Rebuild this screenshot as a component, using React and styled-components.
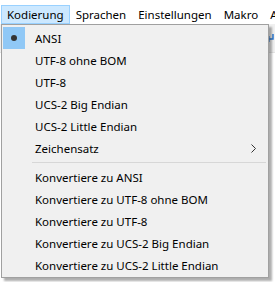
import React from "react";
import styled, { createGlobalStyle } from "styled-components";

const GlobalStyle = createGlobalStyle`
    body {
        margin: 0;
        background: #ffffff;
        font-family: "Noto Sans", "Liberation Sans", sans-serif;
        font-size: 11.5px;
        color: #000;
    }
`;

const Page = styled.div`
    position: relative;
    width: 275px;
    height: 282px;
    overflow: hidden;
    background: #ffffff;
`;

const MenuBar = styled.div`
    display: flex;
    align-items: stretch;
    height: 19px;
    margin-top: 5px;
    padding-left: 1px;
    white-space: nowrap;
`;

const BarItem = styled.div`
    display: flex;
    align-items: center;
    padding: 0 5px 0 5px;
    border: 1px solid ${({ active }) => (active ? "#99d1ff" : "transparent")};
    background: ${({ active }) => (active ? "#cce8ff" : "transparent")};
`;

const Toolbar = styled.div`
    display: flex;
    justify-content: flex-end;
    align-items: center;
    height: 28px;
    background: #f0f0f0;
    border-bottom: 1px solid #e3e3e3;
    padding-right: 1px;
`;

const Editor = styled.div`
    height: 230px;
    background: #ffffff;
`;

const Dropdown = styled.div`
    position: absolute;
    left: 1px;
    top: 24px;
    width: 268px;
    box-sizing: border-box;
    background: #f0f0f0;
    border: 1px solid #a0a0a0;
    padding: 2px 1px 1px 1px;
    box-shadow: 3px 3px 2px rgba(0, 0, 0, 0.32);
`;

const Item = styled.div`
    display: flex;
    align-items: center;
    height: 22px;
    white-space: nowrap;
`;

const CheckCell = styled.div`
    display: flex;
    align-items: center;
    justify-content: center;
    width: 22px;
    height: 22px;
    background: ${({ checked }) => (checked ? "#90c8f6" : "transparent")};
`;

const Bullet = styled.span`
    width: 6px;
    height: 6px;
    border-radius: 50%;
    background: #333;
`;

const Label = styled.span`
    margin-left: 10px;
    flex: 1;
`;

const SubArrow = styled.svg`
    width: 5px;
    height: 9px;
    margin-right: 11px;
`;

const Separator = styled.div`
    height: 1px;
    background: #d7d7d7;
    margin: 3px 1px 3px 29px;
`;

const encodings = ["ANSI", "UTF-8 ohne BOM", "UTF-8", "UCS-2 Big Endian", "UCS-2 Little Endian"];
const conversions = encodings.map((e) => `Konvertiere zu ${e}`);

const MenuItem = ({ label, checked, submenu }) => (
    <Item>
        <CheckCell checked={checked}>{checked && <Bullet />}</CheckCell>
        <Label>{label}</Label>
        {submenu && (
            <SubArrow viewBox="0 0 5 9">
                <path d="M0.5 0.5 L4.5 4.5 L0.5 8.5" fill="none" stroke="#333" strokeWidth="1" />
            </SubArrow>
        )}
    </Item>
);

const App = () => {
    return (
        <Page>
            <GlobalStyle />
            <MenuBar>
                <BarItem active>Kodierung</BarItem>
                <BarItem>Sprachen</BarItem>
                <BarItem>Einstellungen</BarItem>
                <BarItem>Makro</BarItem>
                <BarItem>Ausführen</BarItem>
            </MenuBar>
            <Toolbar>
                <svg width="8" height="10" viewBox="0 0 8 10">
                    <path d="M7 1 V6 H2" fill="none" stroke="#2a7ad5" strokeWidth="1.5" />
                    <path d="M3.5 3.5 L1 6 L3.5 8.5" fill="none" stroke="#2a7ad5" strokeWidth="1.5" />
                </svg>
            </Toolbar>
            <Editor />

            <Dropdown>
                {encodings.map((e, i) => (
                    <MenuItem key={e} label={e} checked={i === 0} />
                ))}
                <MenuItem label="Zeichensatz" submenu />
                <Separator />
                {conversions.map((c) => (
                    <MenuItem key={c} label={c} />
                ))}
            </Dropdown>
        </Page>
    );
};

export default App;
